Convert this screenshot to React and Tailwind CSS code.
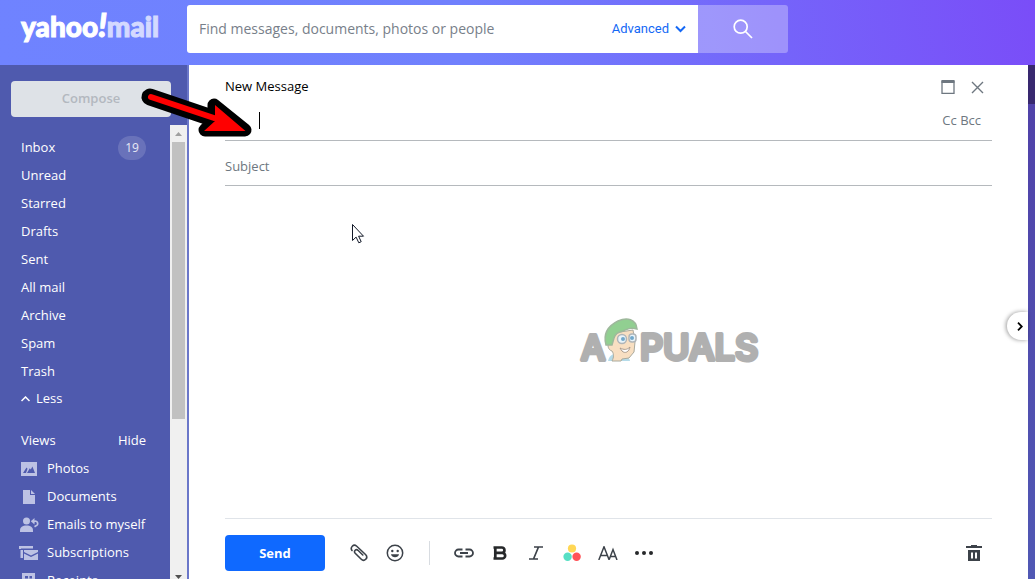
import React, { useState } from 'react';

const FOLDERS = ['Inbox', 'Unread', 'Starred', 'Drafts', 'Sent', 'All mail', 'Archive', 'Spam', 'Trash'];

const VIEWS = [
  { name: 'Photos', icon: <PhotosIcon /> },
  { name: 'Documents', icon: <DocumentIcon /> },
  { name: 'Emails to myself', icon: <MyselfIcon /> },
  { name: 'Subscriptions', icon: <SubscriptionsIcon /> },
  { name: 'Receipts', icon: <ReceiptIcon /> },
];

function PhotosIcon() {
  return (
    <svg width="20" height="20" viewBox="0 0 20 20" fill="currentColor">
      <path fillRule="evenodd" d="M2 3h16v14H2zM4 14h3l1.500-4.200-1-1.300L4 14zm4 0h8l-2.600-6.500-1.600 3-1-1.300z" />
    </svg>
  );
}

function DocumentIcon() {
  return (
    <svg width="20" height="20" viewBox="0 0 20 20" fill="currentColor">
      <path d="M4 3h7v5h5v9H4zM12 3l4 4h-4z" />
    </svg>
  );
}

function MyselfIcon() {
  return (
    <svg width="20" height="20" viewBox="0 0 20 20" fill="currentColor">
      <circle cx="7.500" cy="6" r="3.500" />
      <path d="M1 17v-1.500C1 12 3.500 10.500 7.500 10.500S14 12 14 15.500V17z" />
      <path d="M14 6.300h1.700a2 2 0 0 1 1.300 4.500l-1.500 1" fill="none" stroke="currentColor" strokeWidth="1.700" />
      <path d="M15.500 3v6.600L11.800 6.300z" />
    </svg>
  );
}

function SubscriptionsIcon() {
  return (
    <svg width="20" height="20" viewBox="0 0 20 20" fill="currentColor">
      <path d="M0 3h14v2.500H2V6H0zM1.500 7H4v8H1.500zM5 7h14v2l-7 3.500L5 9z" />
      <path d="M5 10.500l7 3.500 7-3.500V17H5z" />
    </svg>
  );
}

function ReceiptIcon() {
  return (
    <svg width="20" height="20" viewBox="0 0 20 20" fill="currentColor">
      <path fillRule="evenodd" d="M3 2h13v16l-2-2-2.200 2-2.300-2-2.300 2L5 16l-2 2zM6 5v2.500h3V5zm4.500 0v2.500H13V5zM6 9v1.500h7V9z" />
    </svg>
  );
}

function Arrow() {
  return (
    <svg className="pointer-events-none absolute left-0 top-0 z-20" width="260" height="145" viewBox="0 0 260 145" aria-hidden="true">
      <g stroke="#000" strokeWidth="13" strokeLinejoin="round" strokeLinecap="round">
        <path d="M150 97L212 118" strokeWidth="17" />
        <path d="M214 105L245 130H205L214 121z" fill="#000" />
      </g>
      <path d="M151 97L214 118" stroke="#f00" strokeWidth="6" strokeLinecap="round" />
      <path d="M215 105L245.500 131H204L215 121z" fill="#f00" />
    </svg>
  );
}

function Pointer() {
  return (
    <svg className="pointer-events-none absolute left-[351px] top-[223px] z-20" width="14" height="22" viewBox="0 0 14 22" aria-hidden="true">
      <path d="M1.500 1.500v16l3.600-3.400 2.700 5.700 2.400-1.100-2.600-5.500h4.900z" fill="#fff" stroke="#111827" />
    </svg>
  );
}

function Watermark() {
  return (
    <svg className="pointer-events-none absolute left-[390px] top-[250px]" width="200" height="64" viewBox="0 0 200 64" role="img" aria-label="Appuals">
      <g fill="#b0b0b0" stroke="#b0b0b0" strokeWidth="4" strokeLinejoin="round" fontFamily="Inter, sans-serif" fontWeight="500">
        <text x="2" y="45" fontSize="34">A</text>
        <text x="61" y="45" fontSize="36">PUALS</text>
      </g>
      <path d="M29 46c1-5 5-8 9-7l10 3c2 1 3 3 3 4z" fill="#b5dbe9" />
      <path d="M30 27l5-9 19-3 2 12-1 10-5 6-7 1-1 2h-9c2-4 2-7 0-10-4-1-5-6-3-9z" fill="#f8dfc2" stroke="#aaa99c" />
      <path d="M27 30c-3-11 2-19 12-24 9-4 18-2 19 8-6-2-9 0-14 2-5 1-8 3-9 7l-2 7z" fill="#91cf91" stroke="#9eb89c" strokeWidth="1.500" />
      <g fill="#e9f4fa" stroke="#b0b5b8" strokeWidth="1.500">
        <circle cx="43" cy="24" r="4.500" />
        <rect x="50" y="19" width="7" height="8" rx="3" />
      </g>
      <circle cx="44" cy="24" r="2" fill="#73a8ca" />
      <circle cx="53" cy="23" r="2" fill="#73a8ca" />
      <path d="M41 33c4 2 7 2 10-1-1 5-5 7-8 4z" fill="#fff" stroke="#a99a8d" />
    </svg>
  );
}

function ToolButton({ label, children }) {
  return (
    <button type="button" aria-label={label} className="flex h-9 w-9 shrink-0 items-center justify-center text-[#3c4249]">
      {children}
    </button>
  );
}

function Header() {
  return (
    <header className="flex h-[65px] shrink-0 items-start bg-[linear-gradient(80deg,#6f83ff_0%,#7080fd_45%,#7564fa_75%,#7a4df8_100%)]">
      <a href="#mail" className="w-[187px] shrink-0 pl-[21px] pt-2 font-[Lato,sans-serif] text-[28px] leading-9 font-black text-white">
        <span className="[-webkit-text-stroke:1px_white]">yahoo<i className="text-[32px] leading-none">!</i></span>
        <span className="text-[#d4d9ff] [-webkit-text-stroke:1px_#d4d9ff]">mail</span>
      </a>
      <form className="mt-[5px] flex h-12 w-3/5 max-w-[601px]" onSubmit={(e) => e.preventDefault()}>
        <div className="flex min-w-0 flex-1 items-center rounded-l-[3px] bg-white px-3">
          <input
            type="text"
            aria-label="Search mail"
            placeholder="Find messages, documents, photos or people"
            className="min-w-0 flex-1 text-sm placeholder-[#78808a] outline-none"
          />
          <button type="button" className="flex items-center gap-1.5 font-[Roboto,sans-serif] text-[13px] text-[#1468f5]">
            Advanced
            <svg width="11" height="8" viewBox="0 0 11 8" fill="none" stroke="currentColor" strokeWidth="2">
              <path d="M1 1.500l4.500 4.500L10 1.500" />
            </svg>
          </button>
        </div>
        <button type="submit" aria-label="Search" className="flex w-[90px] items-center justify-center rounded-r-[3px] bg-white/30 text-white">
          <svg width="20" height="20" viewBox="0 0 20 20" fill="none" stroke="currentColor" strokeWidth="1.700">
            <circle cx="7.700" cy="7.700" r="6.500" />
            <path d="M12.500 12.500l6.500 6.500" />
          </svg>
        </button>
      </form>
    </header>
  );
}

function Sidebar() {
  const [expanded, setExpanded] = useState(true);
  const folders = expanded ? FOLDERS : FOLDERS.slice(0, 5);

  return (
    <aside className="flex w-[189px] shrink-0 flex-col border-r-2 border-[#6b77c9] bg-[#4f5aae] pt-4 text-[13px] text-white">
      <button type="button" className="mb-2 ml-[11px] mr-4 h-9 shrink-0 rounded-sm bg-[#dee2e7] font-semibold text-[#b3b8bf]">
        Compose
      </button>
      <div className="flex min-h-0 flex-1">
        <nav className="min-w-0 flex-1 overflow-hidden pl-[21px] pr-6 pt-[9px]">
          {folders.map((folder) => (
            <a key={folder} href="#folder" className="flex h-7 items-center justify-between">
              {folder}
              {folder === 'Inbox' && (
                <span className="flex h-6 w-7 items-center justify-center rounded-full bg-white/15 text-xs text-white/85">19</span>
              )}
            </a>
          ))}
          <button type="button" onClick={() => setExpanded(!expanded)} className="flex h-[26px] items-center gap-1.5">
            <svg width="9" height="6" viewBox="0 0 9 6" fill="none" stroke="currentColor" strokeWidth="1.500">
              <path d={expanded ? 'M.5 5l4-4 4 4' : 'M.5 1l4 4 4-4'} />
            </svg>
            {expanded ? 'Less' : 'More'}
          </button>
          <div className="mt-[15px] flex h-7 items-center justify-between">
            <span>Views</span>
            <button type="button">Hide</button>
          </div>
          {VIEWS.map((view) => (
            <a key={view.name} href="#view" className="-ml-0.5 flex h-7 items-center gap-2 whitespace-nowrap">
              <span className="text-[#bdc2e4]">{view.icon}</span>
              {view.name}
            </a>
          ))}
        </nav>
        <div className="flex w-[17px] shrink-0 flex-col items-center bg-[#f0f0f0]" aria-hidden="true">
          <svg width="17" height="17" viewBox="0 0 17 17" className="shrink-0">
            <path d="M5 11l3.500-4 3.500 4z" fill="#a0a0a0" />
          </svg>
          <div className="h-[61%] w-[13px] bg-[#c1c1c1]" />
          <svg width="17" height="6" viewBox="0 0 17 6" className="mt-auto shrink-0">
            <path d="M5 2h7L8.500 6z" fill="#505050" />
          </svg>
        </div>
      </div>
    </aside>
  );
}

function Composer() {
  return (
    <main className="relative flex min-w-0 flex-1 flex-col bg-white px-9 pt-3 text-[13px]">
      <div className="flex h-5 shrink-0 items-center justify-between">
        <h1 className="text-black">New Message</h1>
        <div className="flex items-center gap-4 pr-2 text-[#6e7780]">
          <button type="button" aria-label="Expand">
            <svg width="14" height="14" viewBox="0 0 14 14" fill="none" stroke="currentColor">
              <path d="M1 1.500h12v12H1z" strokeWidth="1.300" />
              <path d="M.5 1.500h13" strokeWidth="3" />
            </svg>
          </button>
          <button type="button" aria-label="Close">
            <svg width="13" height="13" viewBox="0 0 13 13" fill="none" stroke="currentColor" strokeWidth="1.400">
              <path d="M1 1l11 11M12 1L1 12" />
            </svg>
          </button>
        </div>
      </div>
      <div className="flex h-11 shrink-0 items-center border-b border-[#b5b9bd] pt-1">
        <div className="ml-[34px] h-[17px] w-px bg-black" />
        <input type="text" aria-label="To" className="h-8 min-w-0 flex-1 outline-none" />
        <button type="button" className="mr-[11px] text-[#6e7780]">Cc Bcc</button>
      </div>
      <div className="flex h-[45px] shrink-0 border-b border-[#b5b9bd]">
        <input type="text" aria-label="Subject" placeholder="Subject" className="mt-2 h-[34px] w-full placeholder-[#6e7780] outline-none" />
      </div>
      <textarea aria-label="Message body" className="min-h-0 flex-1 resize-none outline-none" />
      <Watermark />
      <div className="flex shrink-0 items-center border-t border-[#e0e4e9] pb-2 pt-4">
        <button type="button" className="mr-4 h-9 w-[100px] rounded-sm bg-[#0f69ff] pt-0.5 font-bold text-white">Send</button>
        <ToolButton label="Attach files">
          <svg width="18" height="18" viewBox="0 0 18 18" fill="none" stroke="currentColor" strokeWidth="1.600" strokeLinecap="round">
            <path d="M2 6.500C-.2 3.500 3.500-.5 6.500 2L15.500 10.500C18.800 14 14.300 18.300 11 15L5.200 9.300C3.300 7 6 4.500 8 6.300L12.800 11" />
          </svg>
        </ToolButton>
        <ToolButton label="Insert emoji">
          <svg width="18" height="18" viewBox="0 0 18 18" fill="currentColor">
            <circle cx="9" cy="9" r="7.700" fill="none" stroke="currentColor" strokeWidth="1.500" />
            <circle cx="6.300" cy="7" r="1.200" />
            <circle cx="11.700" cy="7" r="1.200" />
            <path d="M5 10.200h8c-.5 4-7.500 4-8 0z" />
          </svg>
        </ToolButton>
        <div className="mx-4 h-6 w-px bg-[#d8dce1]" />
        <ToolButton label="Insert link">
          <svg width="20" height="10" viewBox="0 0 20 10" fill="none" stroke="currentColor" strokeWidth="1.800">
            <path d="M8.500 1.500H4.500a3.500 3.500 0 0 0 0 7h4M11.500 1.500h4a3.500 3.500 0 0 1 0 7h-4M6 5h8" />
          </svg>
        </ToolButton>
        <ToolButton label="Bold">
          <svg width="14" height="14" viewBox="0 0 14 14" fill="none" stroke="#26282a" strokeWidth="2.700">
            <path d="M.5 1.500h8.300a2.600 2.600 0 0 1 0 5.300H3M2.300 1.500v11M.5 12.500h8.800a2.800 2.800 0 0 0 0-5.700" />
          </svg>
        </ToolButton>
        <ToolButton label="Italic">
          <svg width="14" height="14" viewBox="0 0 14 14" fill="none" stroke="currentColor" strokeWidth="1.700">
            <path d="M5 1h9M0 13h9M9.500 1L4.500 13" />
          </svg>
        </ToolButton>
        <ToolButton label="Text color">
          <svg width="18" height="18" viewBox="0 0 18 18">
            <circle cx="9" cy="4.500" r="4.100" fill="#ffd755" />
            <circle cx="4.600" cy="12.700" r="4.200" fill="#57dfc4" />
            <circle cx="13.600" cy="12.700" r="4.200" fill="#ff5257" />
          </svg>
        </ToolButton>
        <ToolButton label="Font size">
          <svg width="20" height="14" viewBox="0 0 20 14" fill="none" stroke="currentColor" strokeWidth="1.500">
            <path d="M.8 14L6 .8 11.200 14M2.500 9.500h7M11 14l4-10.500L19 14M12.500 10.500h5" />
          </svg>
        </ToolButton>
        <ToolButton label="More options">
          <svg width="18" height="4" viewBox="0 0 18 4" fill="#26282a">
            <circle cx="2" cy="2" r="2" />
            <circle cx="9" cy="2" r="2" />
            <circle cx="16" cy="2" r="2" />
          </svg>
        </ToolButton>
        <div className="ml-auto">
          <ToolButton label="Delete draft">
            <svg width="16" height="16" viewBox="0 0 16 16" fill="currentColor">
              <path fillRule="evenodd" d="M5 0h6v1h5v2H0V1h5zM2 5h12v11H2zM5 7.500v6h2v-6zm4 0v6h2v-6z" />
            </svg>
          </ToolButton>
        </div>
      </div>
      <button
        type="button"
        aria-label="Show panel"
        className="absolute right-0 top-[247px] flex h-7 w-[21px] items-center justify-center rounded-l-full bg-white pl-1 text-black shadow-[-1px_0_4px_rgba(0,0,0,0.4)]"
      >
        <svg width="6" height="9" viewBox="0 0 6 9" fill="none" stroke="currentColor" strokeWidth="1.800">
          <path d="M1 .7l3.800 3.800L1 8.300" />
        </svg>
      </button>
    </main>
  );
}

export default function App() {
  return (
    <div className="relative flex h-screen flex-col overflow-hidden bg-[#4f5aae] font-['Open_Sans','Noto_Sans',sans-serif]">
      <Header />
      <div className="flex min-h-0 flex-1">
        <Sidebar />
        <Composer />
        <div className="w-[7px] shrink-0 bg-[linear-gradient(#5040a8,#5058b4)]">
          <div className="h-[39px] bg-[#38286f]" />
        </div>
      </div>
      <Arrow />
      <Pointer />
    </div>
  );
}
